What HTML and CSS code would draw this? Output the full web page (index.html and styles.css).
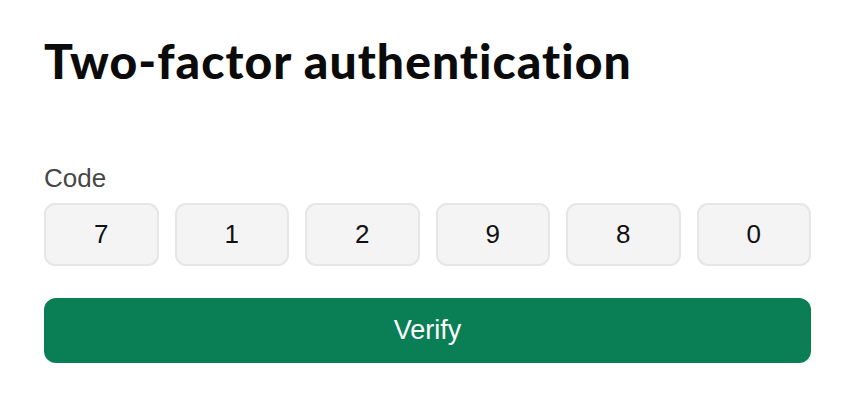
FILE: index.html
```html
<!DOCTYPE html>
<html>
<head>
<meta charset="utf-8">
<link rel="stylesheet" href="styles.css">
</head>
<body>
<main class="card">
  <h1 class="title">Two-factor authentication</h1>
  <form class="form">
    <label class="label">Code</label>
    <div class="digits">
      <div class="digit">7</div>
      <div class="digit">1</div>
      <div class="digit">2</div>
      <div class="digit">9</div>
      <div class="digit">8</div>
      <div class="digit">0</div>
    </div>
    <button type="button" class="verify">Verify</button>
  </form>
</main>
</body>
</html>
```
FILE: styles.css
```css
html, body {
  margin: 0;
  padding: 0;
  background: #ffffff;
}
.card {
  width: 767px;
  padding: 33px 0 0 44px;
  font-family: "Liberation Sans", Arial, sans-serif;
}
.title {
  margin: 0;
  font-family: Lato, "Noto Sans", sans-serif;
  font-weight: 900;
  font-size: 48px;
  line-height: 56px;
  color: #0b0b0b;
  letter-spacing: 1.05px;
}
.form {
  margin-top: 74px;
  display: flex;
  flex-direction: column;
}
.label {
  font-size: 26px;
  line-height: 30px;
  color: #474747;
  margin-bottom: 10px;
}
.digits {
  display: grid;
  grid-template-columns: repeat(6, 1fr);
  gap: 16px;
}
.digit {
  height: 59px;
  border: 2px solid #e6e6e6;
  border-radius: 11px;
  background: #f4f4f4;
  display: flex;
  align-items: center;
  justify-content: center;
  font-size: 26px;
  color: #111;
}
.verify {
  margin-top: 32px;
  height: 65px;
  border: none;
  border-radius: 12px;
  background: #0a7f55;
  color: #ffffff;
  font-family: "Liberation Sans", Arial, sans-serif;
  font-size: 27px;
  padding: 0;
}
```
